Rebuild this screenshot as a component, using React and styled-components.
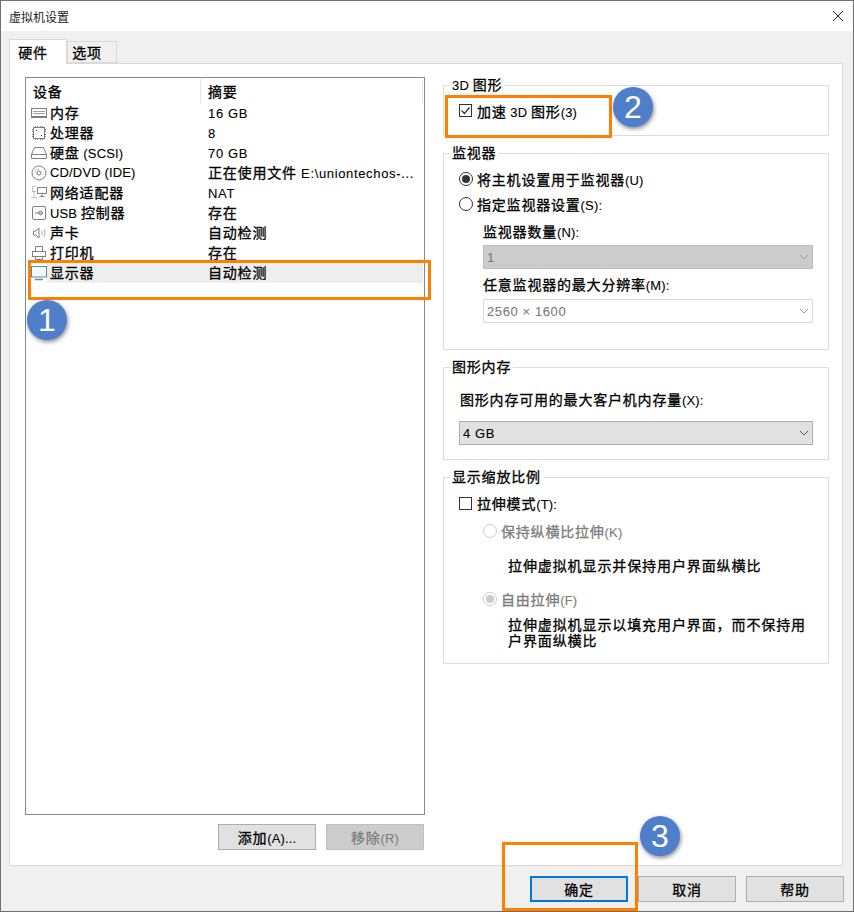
import React from "react";
import styled, { createGlobalStyle } from "styled-components";

const GlobalStyle = createGlobalStyle`
  html, body {
    margin: 0;
    padding: 0;
    background: #f0f0f0;
  }
  * {
    box-sizing: border-box;
  }
`;

const fontStack = `"Liberation Sans", "Noto Sans CJK SC", sans-serif`;

const Han = styled.span`
  letter-spacing: 0.8px;
  -webkit-text-stroke: 0.3px currentColor;
`;

const Latin = styled.span`
  font-size: 13px;
  letter-spacing: 0.15px;
  white-space: pre;
  -webkit-text-stroke: 0.1px currentColor;
`;

const Window = styled.div`
  position: relative;
  width: 854px;
  height: 912px;
  display: flex;
  flex-direction: column;
  background: #f0f0f0;
  border: 1px solid #6f6f6f;
  font-family: ${fontStack};
  font-size: 14px;
  color: #000;
  overflow: hidden;
`;

const TitleBar = styled.div`
  height: 30px;
  flex: none;
  display: flex;
  align-items: center;
  justify-content: space-between;
  padding: 0 9px 0 8px;
  background: #fff;
  font-size: 12px;
  color: #222;
`;

const TabRow = styled.div`
  height: 32px;
  flex: none;
  display: flex;
  align-items: flex-end;
  padding: 8px 0 0 8px;
`;

const Tab = styled.div`
  display: flex;
  align-items: center;
  justify-content: center;
  width: ${(p) => (p.$active ? 58 : 50)}px;
  height: ${(p) => (p.$active ? 25 : 22)}px;
  padding-right: 10px;
  background: ${(p) => (p.$active ? "#fff" : "#f0f0f0")};
  border: 1px solid #d9d9d9;
  border-bottom: ${(p) => (p.$active ? "none" : "1px solid #d9d9d9")};
  margin-bottom: ${(p) => (p.$active ? "-1px" : "0")};
  position: relative;
  z-index: 1;
`;

const Panel = styled.div`
  width: 834px;
  height: 803px;
  flex: none;
  margin-left: 8px;
  display: flex;
  gap: 18px;
  padding: 13px 13px 14px 15px;
  background: #fff;
  border: 1px solid #d9d9d9;
`;

const LeftColumn = styled.div`
  width: 400px;
  flex: none;
  display: flex;
  flex-direction: column;
`;

const ListBox = styled.div`
  height: 738px;
  flex: none;
  border: 1px solid #828790;
  padding-top: 1px;
`;

const ListHeader = styled.div`
  height: 24px;
  display: flex;
  align-items: center;
`;

const HeadCell = styled.div`
  width: ${(p) => p.$width}px;
  height: 100%;
  display: flex;
  align-items: center;
  padding-left: ${(p) => p.$pad}px;
  border-right: 1px solid #e5e5e5;
`;

const Rows = styled.div`
  display: flex;
  flex-direction: column;
`;

const Row = styled.div`
  height: 20px;
  display: flex;
  align-items: center;
  padding-left: 5px;
`;

const RowIcon = styled.svg`
  width: 16px;
  height: 16px;
  flex: none;
`;

const RowBody = styled.div`
  flex: 1;
  height: 100%;
  margin-right: 1px;
  padding-bottom: 2px;
  display: flex;
  align-items: center;
  background: ${(p) => (p.$selected ? "#eeeeee" : "transparent")};
`;

const DeviceName = styled.div`
  width: 161px;
  flex: none;
  white-space: nowrap;
  padding-left: 3px;
`;

const Summary = styled.div`
  white-space: nowrap;
  padding-top: ${(p) => (p.$latinOnly ? 2 : 0)}px;
  ${Latin} {
    letter-spacing: 0.65px;
  }
`;

const ListActions = styled.div`
  display: flex;
  justify-content: flex-end;
  gap: 10px;
  margin-top: 9px;
  padding-right: 1px;
`;

const Button = styled.div`
  width: 98px;
  height: 26px;
  display: flex;
  align-items: center;
  justify-content: center;
  background: ${(p) => (p.$disabled ? "#cccccc" : "#e1e1e1")};
  color: ${(p) => (p.$disabled ? "#7f7f7f" : "#000")};
  border: ${(p) =>
    p.$default
      ? "2px solid #0078d7"
      : p.$disabled
      ? "1px solid #bfbfbf"
      : "1px solid #adadad"};
`;

const RightColumn = styled.div`
  width: 386px;
  flex: none;
  display: flex;
  flex-direction: column;
  gap: 17px;
  padding-top: 8px;
`;

const Group = styled.div`
  position: relative;
  height: ${(p) => p.$height}px;
  flex: none;
  border: 1px solid #dcdcdc;
  padding: ${(p) => p.$top}px 0 0 15px;
  display: flex;
  flex-direction: column;
`;

const Legend = styled.div`
  position: absolute;
  top: -10px;
  left: 6px;
  padding: 0 2px;
  line-height: 18px;
  background: #fff;
  white-space: nowrap;
`;

const OptionRow = styled.label`
  display: flex;
  align-items: center;
  height: ${(p) => p.$height || 25}px;
  margin-top: ${(p) => p.$top || 0}px;
  margin-left: ${(p) => p.$indent || 0}px;
  color: ${(p) => (p.$muted ? "#7c7c7c" : "#000")};
  white-space: nowrap;
`;

const CheckBox = styled.span`
  width: 13px;
  height: 13px;
  flex: none;
  margin-right: 5px;
  border: 1px solid #333;
  display: flex;
  align-items: center;
  justify-content: center;
`;

const RadioDot = styled.span`
  width: 14px;
  height: 14px;
  flex: none;
  margin-right: 4px;
  border-radius: 50%;
  border: 1px solid ${(p) => (p.$muted ? "#cccccc" : "#333")};
  display: flex;
  align-items: center;
  justify-content: center;
  &::after {
    content: "";
    display: ${(p) => (p.$on ? "block" : "none")};
    width: 8px;
    height: 8px;
    border-radius: 50%;
    background: ${(p) => (p.$muted ? "#cccccc" : "#333")};
  }
`;

const FieldLabel = styled.div`
  height: ${(p) => p.$height}px;
  flex: none;
  display: flex;
  align-items: center;
  margin-left: ${(p) => p.$indent}px;
  white-space: nowrap;
`;

const Select = styled.div`
  height: 24px;
  flex: none;
  width: ${(p) => p.$width}px;
  margin-top: ${(p) => p.$top || 0}px;
  margin-left: ${(p) => p.$indent || 0}px;
  display: flex;
  align-items: center;
  justify-content: space-between;
  padding: 0 3px 0 3px;
  background: ${(p) => p.$bg};
  border: 1px solid ${(p) => p.$border};
  color: ${(p) => p.$color || "#000"};
  ${Latin} {
    letter-spacing: 0.6px;
  }
`;

const Note = styled.div`
  margin-top: ${(p) => p.$top}px;
  margin-left: 49px;
  width: 304px;
  line-height: 16px;
  ${Han} {
    letter-spacing: 0.9px;
  }
`;

const BottomBar = styled.div`
  flex: 1;
  display: flex;
  justify-content: flex-end;
  gap: 10px;
  padding: 10px 9px 0 0;
`;

const Marker = styled.div`
  position: absolute;
  left: ${(p) => p.$x}px;
  top: ${(p) => p.$y}px;
  width: ${(p) => p.$w}px;
  height: ${(p) => p.$h}px;
  border: 3px solid #ff8000;
  pointer-events: none;
  z-index: 3;
`;

const Badge = styled.div`
  position: absolute;
  left: ${(p) => p.$x - 20}px;
  top: ${(p) => p.$y - 20}px;
  width: 40px;
  height: 40px;
  border-radius: 50%;
  background: #4f7fcb;
  color: #fff;
  display: flex;
  align-items: center;
  justify-content: center;
  font-family: "Liberation Sans", sans-serif;
  font-size: 32px;
  box-shadow: 1px 2px 4px rgba(0, 0, 0, 0.45);
  z-index: 4;
`;

const LabelText = styled.span`
  white-space: normal;
`;

const hanRun = /([\u4e00-\u9fff，]+)/;

// the dialog mixes a wide chinese face with a narrow latin one
function Label({ children }) {
  return (
    <LabelText>
      {children
        .split(hanRun)
        .map((part, i) =>
          i % 2 ? <Han key={i}>{part}</Han> : part ? <Latin key={i}>{part}</Latin> : null
        )}
    </LabelText>
  );
}

const stroke = { fill: "none", stroke: "#808080", strokeWidth: 1 };

const icons = {
  memory: (
    <g {...stroke}>
      <rect x="0.500" y="3.500" width="15" height="9" />
      <path d="M2 6.500h12M2 8.500h12" stroke="#a0a0a0" />
      <path d="M1 11.500h14" />
    </g>
  ),
  cpu: (
    <g {...stroke}>
      <rect x="2.500" y="2.500" width="11" height="11" />
      <path d="M4.500 1v1M6.500 1v1M9.500 1v1M11.500 1v1M4.500 14v1M6.500 14v1M9.500 14v1M11.500 14v1M1 4.500h1M1 6.500h1M1 9.500h1M1 11.500h1M14 4.500h1M14 6.500h1M14 9.500h1M14 11.500h1" />
      <path d="M5 5.500h1M10 10.500h1" stroke="#333" />
    </g>
  ),
  disk: (
    <g {...stroke}>
      <path d="M3.500 2.500h9l3 7v4H.5v-4z" />
      <path d="M.5 9.500h15" />
    </g>
  ),
  cd: (
    <g {...stroke}>
      <circle cx="8" cy="8" r="7" />
      <circle cx="8" cy="8" r="2" />
      <path d="M4 8a4 4 0 0 1 4-4" stroke="#c0c0c0" />
    </g>
  ),
  network: (
    <g {...stroke}>
      <rect x="6.500" y="2.500" width="9" height="6" />
      <path d="M11 8.500v3M8.500 11.500h5" />
      <path d="M4.500 1.500h-3v5h3M.5 12.500h5M3 6.500v6" strokeDasharray="1 1" />
    </g>
  ),
  usb: (
    <g {...stroke}>
      <rect x="1.500" y="1.500" width="13" height="13" rx="1.500" />
      <path d="M4 8h8M10 6l2 2-2 2M7 8l1.500-2H10M8 8l1 2h1" />
    </g>
  ),
  sound: (
    <g {...stroke}>
      <path d="M2.500 6v4h2.500l3 3V3L5 6z" />
      <path d="M10.500 6a3 3 0 0 1 0 4M12.500 4a6 6 0 0 1 0 8" stroke="#a8a8a8" />
    </g>
  ),
  printer: (
    <g {...stroke}>
      <path d="M4.500 6V1.500h7V6" />
      <rect x="1.500" y="6.500" width="13" height="5" />
      <path d="M4.500 11v3.500h7V11" />
    </g>
  ),
  display: (
    <g fill="none" stroke="#5b87a8" strokeWidth="1">
      <rect x="0.500" y="1.500" width="15" height="10.500" fill="#f6f9fb" />
      <path d="M4 14.500h8" strokeWidth="1.500" />
    </g>
  ),
};

const devices = [
  { icon: "memory", name: "内存", summary: "16 GB" },
  { icon: "cpu", name: "处理器", summary: "8" },
  { icon: "disk", name: "硬盘 (SCSI)", summary: "70 GB" },
  { icon: "cd", name: "CD/DVD (IDE)", summary: "正在使用文件 E:\\uniontechos-..." },
  { icon: "network", name: "网络适配器", summary: "NAT" },
  { icon: "usb", name: "USB 控制器", summary: "存在" },
  { icon: "sound", name: "声卡", summary: "自动检测" },
  { icon: "printer", name: "打印机", summary: "存在" },
  { icon: "display", name: "显示器", summary: "自动检测", selected: true },
];

function Chevron({ color }) {
  return (
    <svg width="10" height="6" viewBox="0 0 10 6">
      <path d="M1 1l4 4 4-4" fill="none" stroke={color} strokeWidth="1" />
    </svg>
  );
}

function App() {
  return (
    <Window>
      <GlobalStyle />
      <TitleBar>
        <span>虚拟机设置</span>
        <svg width="12" height="12" viewBox="0 0 12 12">
          <path d="M1 1l10 10M11 1L1 11" stroke="#222" strokeWidth="1" />
        </svg>
      </TitleBar>

      <TabRow>
        <Tab $active><Label>硬件</Label></Tab>
        <Tab><Label>选项</Label></Tab>
      </TabRow>

      <Panel>
        <LeftColumn>
          <ListBox>
            <ListHeader>
              <HeadCell $width={175} $pad={7}><Label>设备</Label></HeadCell>
              <HeadCell $width={222} $pad={7}><Label>摘要</Label></HeadCell>
            </ListHeader>
            <Rows>
              {devices.map((d) => (
                <Row key={d.name}>
                  <RowIcon viewBox="0 0 16 16">{icons[d.icon]}</RowIcon>
                  <RowBody $selected={d.selected}>
                    <DeviceName><Label>{d.name}</Label></DeviceName>
                    <Summary $latinOnly={!hanRun.test(d.summary)}><Label>{d.summary}</Label></Summary>
                  </RowBody>
                </Row>
              ))}
            </Rows>
          </ListBox>
          <ListActions>
            <Button><Label>添加(A)...</Label></Button>
            <Button $disabled><Label>移除(R)</Label></Button>
          </ListActions>
        </LeftColumn>

        <RightColumn>
          <Group $height={51} $top={12}>
            <Legend><Label>3D 图形</Label></Legend>
            <OptionRow>
              <CheckBox>
                <svg width="11" height="11" viewBox="0 0 11 11">
                  <path d="M1.500 5.500l3 3 5-6" fill="none" stroke="#333" strokeWidth="1.200" />
                </svg>
              </CheckBox>
              <Label>加速 3D 图形(3)</Label>
            </OptionRow>
          </Group>

          <Group $height={197} $top={12}>
            <Legend><Label>监视器</Label></Legend>
            <OptionRow>
              <RadioDot $on />
              <Label>将主机设置用于监视器(U)</Label>
            </OptionRow>
            <OptionRow>
              <RadioDot />
              <Label>指定监视器设置(S):</Label>
            </OptionRow>
            <FieldLabel $indent={24} $height={29}><Label>监视器数量(N):</Label></FieldLabel>
            <Select $width={330} $indent={24} $bg="#cccccc" $border="#bfbfbf" $color="#7c7c7c">
              <Label>1</Label>
              <Chevron color="#9a9a9a" />
            </Select>
            <FieldLabel $indent={24} $height={30}><Label>任意监视器的最大分辨率(M):</Label></FieldLabel>
            <Select $width={330} $indent={24} $bg="#fff" $border="#d9d9d9" $color="#7c7c7c">
              <Label>2560 × 1600</Label>
              <Chevron color="#9a9a9a" />
            </Select>
          </Group>

          <Group $height={93} $top={19}>
            <Legend><Label>图形内存</Label></Legend>
            <FieldLabel $indent={1} $height={24}><Label>图形内存可用的最大客户机内存量(X):</Label></FieldLabel>
            <Select $width={354} $top={10} $bg="#e1e1e1" $border="#adadad">
              <Label>4 GB</Label>
              <Chevron color="#555" />
            </Select>
          </Group>

          <Group $height={187} $top={13}>
            <Legend><Label>显示缩放比例</Label></Legend>
            <OptionRow $height={24}>
              <CheckBox />
              <Label>拉伸模式(T):</Label>
            </OptionRow>
            <OptionRow $indent={24} $muted $height={32}>
              <RadioDot $muted />
              <Label>保持纵横比拉伸(K)</Label>
            </OptionRow>
            <Note $top={11}><Label>拉伸虚拟机显示并保持用户界面纵横比</Label></Note>
            <OptionRow $indent={24} $muted $height={32} $top={9}>
              <RadioDot $muted $on />
              <Label>自由拉伸(F)</Label>
            </OptionRow>
            <Note $top={2}><Label>拉伸虚拟机显示以填充用户界面，而不保持用户界面纵横比</Label></Note>
          </Group>
        </RightColumn>
      </Panel>

      <BottomBar>
        <Button $default><Label>确定</Label></Button>
        <Button><Label>取消</Label></Button>
        <Button><Label>帮助</Label></Button>
      </BottomBar>

      <Marker $x={27} $y={259} $w={403} $h={40} />
      <Marker $x={444} $y={94} $w={167} $h={43} />
      <Marker $x={501} $y={841} $w={136} $h={69} />
      <Badge $x={46} $y={319}>1</Badge>
      <Badge $x={632} $y={106}>2</Badge>
      <Badge $x={659} $y={835}>3</Badge>
    </Window>
  );
}

export default App;
